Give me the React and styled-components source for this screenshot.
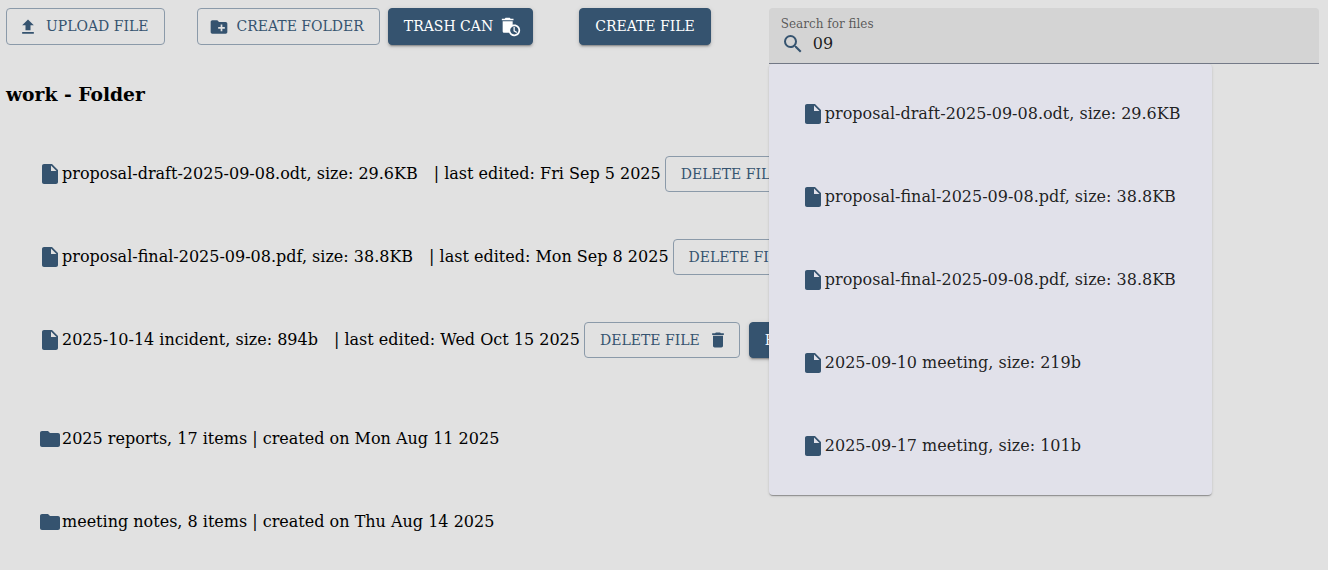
import React, { useState } from 'react'
import styled, { createGlobalStyle, css } from 'styled-components'
import {
  MdAutoDelete,
  MdCreateNewFolder,
  MdDelete,
  MdFolder,
  MdInsertDriveFile,
  MdSearch,
  MdUpload
} from 'react-icons/md'

const files = [
  { id: 1, name: 'proposal-draft-2025-09-08.odt', size: '29.6KB', edited: 'Fri Sep 5 2025' },
  { id: 2, name: 'proposal-final-2025-09-08.pdf', size: '38.8KB', edited: 'Mon Sep 8 2025' },
  { id: 3, name: '2025-10-14 incident', size: '894b', edited: 'Wed Oct 15 2025', editable: true }
]

const folders = [
  { id: 1, name: '2025 reports', items: 17, created: 'Mon Aug 11 2025' },
  { id: 2, name: 'meeting notes', items: 8, created: 'Thu Aug 14 2025' }
]

const results = [
  { id: 1, name: 'proposal-draft-2025-09-08.odt', size: '29.6KB' },
  { id: 2, name: 'proposal-final-2025-09-08.pdf', size: '38.8KB' },
  { id: 3, name: 'proposal-final-2025-09-08.pdf', size: '38.8KB' },
  { id: 4, name: '2025-09-10 meeting', size: '219b' },
  { id: 5, name: '2025-09-17 meeting', size: '101b' }
]

const App = () => {
  const [query, setQuery] = useState('09')

  return (
    <Page>
      <GlobalStyle />
      <Toolbar>
        <UploadGroup>
          <Button $startIcon><MdUpload />UPLOAD FILE</Button>
        </UploadGroup>
        <FolderGroup>
          <Button $startIcon><MdCreateNewFolder />CREATE FOLDER</Button>
          <Button $contained $endIcon>TRASH CAN<MdAutoDelete /></Button>
        </FolderGroup>
        <CreateGroup>
          <Button $contained>CREATE FILE</Button>
        </CreateGroup>
        <Search>
          <SearchField>
            <label htmlFor='search'>Search for files</label>
            <InputRow>
              <MdSearch />
              <input id='search' type='text' value={query} onChange={(e) => setQuery(e.target.value)} />
            </InputRow>
          </SearchField>
          {query && (
            <Results>
              {results.map((file) => (
                <Row key={file.id}>
                  <MdInsertDriveFile />
                  <span>{file.name}, size: {file.size}</span>
                </Row>
              ))}
            </Results>
          )}
        </Search>
      </Toolbar>

      <Title>work - Folder</Title>

      <List>
        {files.map((file) => (
          <Row key={file.id}>
            <MdInsertDriveFile />
            <span>{file.name}, size: {file.size}</span>
            <Edited>| last edited: {file.edited}</Edited>
            <Actions>
              <Button $endIcon>DELETE FILE<MdDelete /></Button>
              {file.editable && <Button $contained>EDIT FILE</Button>}
            </Actions>
          </Row>
        ))}
      </List>
      <List>
        {folders.map((folder) => (
          <Row key={folder.id}>
            <MdFolder />
            <span>{folder.name}, {folder.items} items | created on {folder.created}</span>
          </Row>
        ))}
      </List>
    </Page>
  )
}

const GlobalStyle = createGlobalStyle`
  *{
    box-sizing: border-box;
  }
  body{
    margin: 0;
    background-color: #e1e1e1;
    color: #000;
    font-family: 'DejaVu Serif', serif;
    font-size: 16px;
    line-height: 24px;
  }
  button, input{
    font-family: inherit;
  }
`
const Page = styled.div`
    padding: 8px 9px 0 6px;
`
const Toolbar = styled.header`
    display: flex;
    align-items: flex-start;
`
const UploadGroup = styled.div`
    margin-right: 32px;
`
const FolderGroup = styled.div`
    display: flex;
    gap: 8px;
    margin-right: 46px;
`
const CreateGroup = styled.div`
    margin-right: 58px;
`
const Button = styled.button`
    display: inline-flex;
    align-items: center;
    gap: 8px;
    flex-shrink: 0;
    padding: 5px 15px;
    padding-left: ${(props) => (props.$startIcon ? '11px' : '15px')};
    padding-right: ${(props) => (props.$endIcon ? '11px' : '15px')};
    border: 1px solid #8b9aa9;
    border-radius: 4px;
    background-color: transparent;
    color: #35536f;
    font-size: 14px;
    line-height: 25px;
    white-space: nowrap;
    cursor: pointer;
    svg{
      width: 20px;
      height: 20px;
    }
    ${(props) => props.$contained && css`
      border-color: #35536f;
      background-color: #35536f;
      color: #fff;
      box-shadow: 0 3px 1px -2px rgba(0, 0, 0, 0.2), 0 2px 2px 0 rgba(0, 0, 0, 0.14), 0 1px 5px 0 rgba(0, 0, 0, 0.12);
    `}
`
const Search = styled.div`
    position: relative;
    flex: 1;
    color: rgba(0, 0, 0, 0.87);
`
const SearchField = styled.div`
    padding: 8px 12px 7px;
    border-bottom: 1px solid #747a88;
    border-radius: 4px 4px 0 0;
    background-color: #d4d4d4;
    label{
      display: block;
      color: rgba(0, 0, 0, 0.6);
      font-size: 12px;
      line-height: 16px;
    }
`
const InputRow = styled.div`
    display: flex;
    align-items: center;
    gap: 8px;
    svg{
      width: 24px;
      height: 24px;
      color: #35536f;
    }
    input{
      flex: 1;
      min-width: 0;
      padding: 0;
      border: 0;
      outline: 0;
      background: none;
      color: inherit;
      font-size: 16px;
      line-height: 24px;
    }
`
const List = styled.ul`
    margin: 0;
    padding: 8px 0;
    list-style: none;
`
const Results = styled(List)`
    position: absolute;
    top: 100%;
    left: 0;
    z-index: 10;
    border-radius: 4px;
    background-color: #e1e1ea;
    box-shadow: 0 2px 1px -1px rgba(0, 0, 0, 0.2), 0 1px 1px 0 rgba(0, 0, 0, 0.14), 0 1px 3px 0 rgba(0, 0, 0, 0.12);
`
const Row = styled.li`
    display: flex;
    align-items: center;
    min-height: 83px;
    padding: 0 32px;
    white-space: nowrap;
    > svg{
      flex-shrink: 0;
      width: 24px;
      height: 24px;
      color: #35536f;
    }
`
const Edited = styled.span`
    margin-left: 16px;
`
const Actions = styled.div`
    display: flex;
    gap: 9px;
    margin-left: 4px;
    ${Button}{
      line-height: 24px;
    }
`
const Title = styled.h3`
    margin: 19px 0;
    line-height: 22px;
`
export default App
